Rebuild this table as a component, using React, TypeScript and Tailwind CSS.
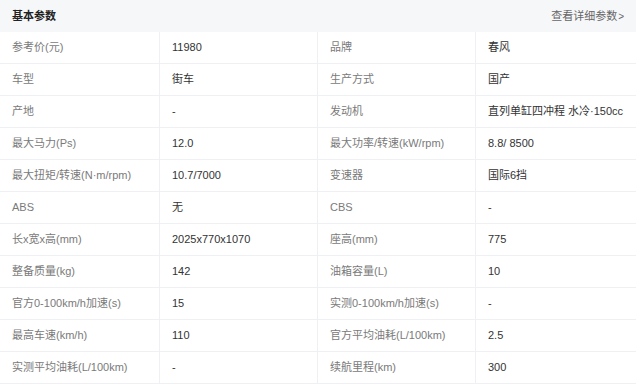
import React from "react";

const rows: [string, string, string, string][] = [
  ["参考价(元)", "11980", "品牌", "春风"],
  ["车型", "街车", "生产方式", "国产"],
  ["产地", "-", "发动机", "直列单缸四冲程 水冷·150cc"],
  ["最大马力(Ps)", "12.0", "最大功率/转速(kW/rpm)", "8.8/ 8500"],
  ["最大扭矩/转速(N·m/rpm)", "10.7/7000", "变速器", "国际6挡"],
  ["ABS", "无", "CBS", "-"],
  ["长x宽x高(mm)", "2025x770x1070", "座高(mm)", "775"],
  ["整备质量(kg)", "142", "油箱容量(L)", "10"],
  ["官方0-100km/h加速(s)", "15", "实测0-100km/h加速(s)", "-"],
  ["最高车速(km/h)", "110", "官方平均油耗(L/100km)", "2.5"],
  ["实测平均油耗(L/100km)", "-", "续航里程(km)", "300"],
];

export default function App() {
  return (
    <div
      className="w-[640px] h-[386px] bg-white overflow-hidden"
      style={{ fontFamily: '"Liberation Sans", "Noto Sans CJK SC", sans-serif' }}
    >
      <div className="w-[636px]">
        <div className="h-[32px] bg-[#f6f7f9] flex items-center justify-between pl-[12px] pr-[12px]">
          <span className="text-[11px] font-bold text-[#222]">基本参数</span>
          <span className="text-[11px] text-[#666] flex items-center">
            查看详细参数<span className="ml-[1px] text-[10px]">&gt;</span>
          </span>
        </div>
        {rows.map((r, i) => (
          <div
            key={i}
            className="grid grid-cols-[160px_158px_158px_160px] h-[32px] border-b border-[#eef0f3] text-[11px] whitespace-nowrap"
          >
            <div className="flex items-center pl-[12px] text-[#7a7a7a] border-r border-[#eef0f3]">{r[0]}</div>
            <div className="flex items-center pl-[12px] text-[#333] border-r border-[#eef0f3]">{r[1]}</div>
            <div className="flex items-center pl-[12px] text-[#7a7a7a] border-r border-[#eef0f3]">{r[2]}</div>
            <div className="flex items-center pl-[12px] text-[#333]">{r[3]}</div>
          </div>
        ))}
      </div>
    </div>
  );
}
